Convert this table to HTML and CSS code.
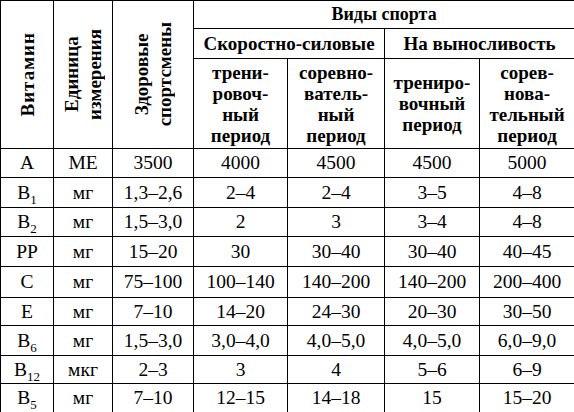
FILE: index.html
```html
<!DOCTYPE html>
<html lang="ru">
<head>
<meta charset="utf-8">
<link rel="stylesheet" href="styles.css">
</head>
<body>
<table class="vt">
<colgroup>
<col class="c1"><col class="c2"><col class="c3"><col class="c4"><col class="c5"><col class="c6"><col class="c7">
</colgroup>
<thead>
<tr class="h1">
<th rowspan="3"><div class="vert spaced">Витамин</div></th>
<th rowspan="3"><div class="vert">Единица<br>измерения</div></th>
<th rowspan="3"><div class="vert">Здоровые<br>спортсмены</div></th>
<th colspan="4" class="top">Виды спорта</th>
</tr>
<tr class="h2">
<th colspan="2">Скоростно-силовые</th>
<th colspan="2">На выносливость</th>
</tr>
<tr class="h3">
<th>трени-<br>ровоч-<br>ный<br>период</th>
<th>соревно-<br>ватель-<br>ный<br>период</th>
<th>трениро-<br>вочный<br>период</th>
<th>сорев-<br>нова-<br>тельный<br>период</th>
</tr>
</thead>
<tbody>
<tr class="r29"><td>A</td><td>МЕ</td><td>3500</td><td>4000</td><td>4500</td><td>4500</td><td>5000</td></tr>
<tr class="r30"><td>B<sub>1</sub></td><td>мг</td><td>1,3–2,6</td><td>2–4</td><td>2–4</td><td>3–5</td><td>4–8</td></tr>
<tr class="r29"><td>B<sub>2</sub></td><td>мг</td><td>1,5–3,0</td><td>2</td><td>3</td><td>3–4</td><td>4–8</td></tr>
<tr class="r30"><td>PP</td><td>мг</td><td>15–20</td><td>30</td><td>30–40</td><td>30–40</td><td>40–45</td></tr>
<tr class="r31"><td>C</td><td>мг</td><td>75–100</td><td>100–140</td><td>140–200</td><td>140–200</td><td>200–400</td></tr>
<tr class="r28"><td>E</td><td>мг</td><td>7–10</td><td>14–20</td><td>24–30</td><td>20–30</td><td>30–50</td></tr>
<tr class="r30"><td>B<sub>6</sub></td><td>мг</td><td>1,5–3,0</td><td>3,0–4,0</td><td>4,0–5,0</td><td>4,0–5,0</td><td>6,0–9,0</td></tr>
<tr class="r28"><td>B<sub>12</sub></td><td>мкг</td><td>2–3</td><td>3</td><td>4</td><td>5–6</td><td>6–9</td></tr>
<tr class="r29"><td>B<sub>5</sub></td><td>мг</td><td>7–10</td><td>12–15</td><td>14–18</td><td>15</td><td>15–20</td></tr>
</tbody>
</table>
</body>
</html>
```
FILE: styles.css
```css
html, body {
  margin: 0;
  padding: 0;
  background: #fff;
}
body {
  font-family: "Liberation Serif", "Times New Roman", serif;
  color: #000;
}
.vt {
  border-collapse: collapse;
  table-layout: fixed;
  width: 574px;
}
.c1 { width: 53px; }
.c2 { width: 59px; }
.c3 { width: 81px; }
.c4 { width: 94px; }
.c5 { width: 97px; }
.c6 { width: 95px; }
.c7 { width: 95px; }
.vt th, .vt td {
  border: 1px solid #000;
  padding: 0;
  text-align: center;
  vertical-align: middle;
}
.vt th {
  font-weight: bold;
  font-size: 19px;
  line-height: 21px;
}
.vt td {
  font-size: 19.5px;
  line-height: 22px;
}
.vt .top {
  font-size: 18px;
}
.vt sub {
  font-size: 13px;
  line-height: 0;
  vertical-align: -5px;
}
.h1 { height: 28px; }
.h2 { height: 30px; }
.h3 { height: 90px; }
.r28 { height: 28px; }
.r29 { height: 29px; }
.r30 { height: 30px; }
.r31 { height: 31px; }
.vert {
  writing-mode: vertical-rl;
  transform: rotate(180deg);
  margin: 0 auto;
  line-height: 23px;
}
.spaced {
  letter-spacing: 1px;
}
```
